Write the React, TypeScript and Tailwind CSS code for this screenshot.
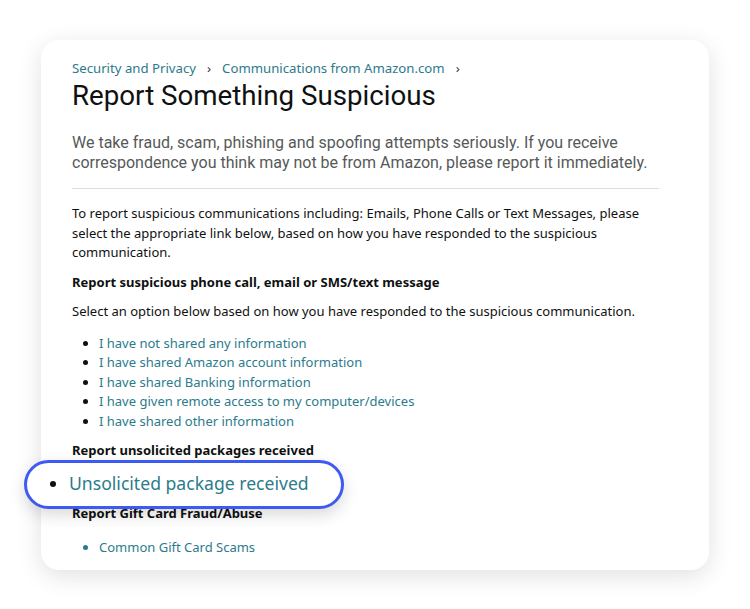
export default function App() {
  const links = [
    "I have not shared any information",
    "I have shared Amazon account information",
    "I have shared Banking information",
    "I have given remote access to my computer/devices",
    "I have shared other information",
  ];

  return (
    <div className="min-h-screen bg-white px-[41px] pt-[40px] font-['Noto_Sans',sans-serif] text-[#0f1111]">
      <div className="rounded-[18px] bg-white pl-[31px] pr-[50px] pt-[18px] pb-[12px] shadow-[0_6px_24px_rgba(0,0,0,0.12)]">
        <div className="flex items-center gap-[11px] text-[13.2px] leading-[20px] text-[#2b7b8c]">
          <span>Security and Privacy</span>
          <span className="text-[#333]">›</span>
          <span>Communications from Amazon.com</span>
          <span className="text-[#333]">›</span>
        </div>
        <h1 className="mt-[1px] font-['Roboto',sans-serif] text-[27.7px] leading-[34px] text-[#0f1111]">
          Report Something Suspicious
        </h1>

        <p className="mt-[20px] font-['Roboto',sans-serif] text-[16px] leading-[20px] text-[#565959]">
          We take fraud, scam, phishing and spoofing attempts seriously. If you receive correspondence you think may not
          be from Amazon, please report it immediately.
        </p>

        <div className="mt-[15px] h-px bg-[#dddddd]" />

        <div className="mt-[15px] text-[13px] leading-[19.5px]">
          <p>
            To report suspicious communications including: Emails, Phone Calls or Text Messages, please select the
            appropriate link below, based on how you have responded to the suspicious communication.
          </p>
          <p className="mt-[10px] font-bold">Report suspicious phone call, email or SMS/text message</p>
          <p className="mt-[10px]">Select an option below based on how you have responded to the suspicious communication.</p>

          <ul className="mt-[12px] list-disc pl-[27px] marker:text-[#0f1111]">
            {links.map((l) => (
              <li key={l} className="text-[#2b7b8c]">
                {l}
              </li>
            ))}
          </ul>

          <p className="mt-[10px] font-bold">Report unsolicited packages received</p>

          <div className="relative z-10 -ml-[48px] mt-[-1px] flex h-[49px] w-[320px] items-center rounded-full border-[3px] border-[#3d5af1] bg-white pl-[23px] shadow-[0_6px_16px_rgba(0,0,0,0.15)]">
            <span className="mr-[13px] h-[6px] w-[6px] rounded-full bg-[#0f1111]" />
            <span className="text-[17.6px] text-[#2b7b8c]">Unsolicited package received</span>
          </div>

          <p className="mt-[-5px] font-bold">Report Gift Card Fraud/Abuse</p>

          <ul className="mt-[15px] list-disc pl-[27px]">
            <li className="text-[#2b7b8c]">Common Gift Card Scams</li>
          </ul>
        </div>
      </div>
    </div>
  );
}
